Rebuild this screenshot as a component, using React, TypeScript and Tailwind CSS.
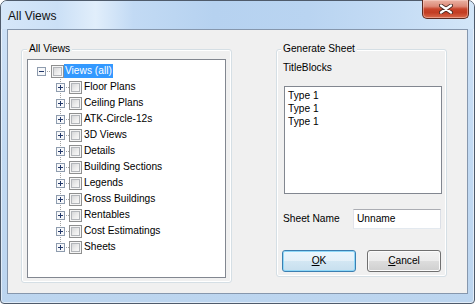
import React from "react";

const items = [
  "Floor Plans",
  "Ceiling Plans",
  "ATK-Circle-12s",
  "3D Views",
  "Details",
  "Building Sections",
  "Legends",
  "Gross Buildings",
  "Rentables",
  "Cost Estimatings",
  "Sheets",
];

function Check() {
  return (
    <div className="w-[13px] h-[13px] shrink-0 border border-[#8e8f8f] bg-[#f6f6f6] p-[1px]">
      <div className="w-full h-full border border-[#b3b6ba] bg-[linear-gradient(135deg,#d6d7d9_0%,#eeeeee_60%,#f8f8f8_100%)]" />
    </div>
  );
}

function Expander({ root, last }: { root?: boolean; last?: boolean }) {
  const w = root ? 14 : 13;
  return (
    <svg width={w} height={16} className="shrink-0 block">
      {!root && (
        <line x1="4.5" y1="0" x2="4.5" y2={last ? 8 : 16} stroke="#a3a3a3" strokeDasharray="1 1" />
      )}
      <line x1={root ? 10 : 10} y1="8.5" x2={w} y2="8.5" stroke="#a3a3a3" strokeDasharray="1 1" />
      <rect x="0.5" y="4.5" width="8" height="8" fill="#f7f8fa" stroke="#8e9cae" />
      <line x1="2" y1="8.5" x2="7" y2="8.5" stroke="#22386a" />
      {!root && <line x1="4.5" y1="6" x2="4.5" y2="11" stroke="#22386a" />}
    </svg>
  );
}

function CloseGlyph() {
  return (
    <svg width="14" height="10" viewBox="0 0 14 10" className="block">
      <path d="M2 1.5 L12 8.5 M12 1.5 L2 8.5" stroke="#4a2a22" strokeWidth="4" strokeLinecap="round" />
      <path d="M2 1.5 L12 8.5 M12 1.5 L2 8.5" stroke="#ffffff" strokeWidth="2.2" strokeLinecap="round" />
    </svg>
  );
}

export default function App() {
  return (
    <div className="w-[475px] h-[304px] bg-white font-['Liberation_Sans',Arial,sans-serif]">
      <div className="w-[475px] h-[304px] border border-[#4f5b6b] rounded-t-[7px] rounded-b-[4px] bg-[linear-gradient(180deg,#cfe2f7_0%,#c2daf3_50%,#bcd5ef_100%)] shadow-[inset_0_0_0_1px_rgba(255,255,255,0.55)] flex flex-col">
        {/* title bar */}
        <div className="h-[28px] flex justify-between rounded-t-[6px] bg-[linear-gradient(90deg,#d6e7f9_0%,#cbe0f6_12%,#e1eefb_20%,#c2daf4_28%,#b6d2f0_45%,#b9d4f1_65%,#c6ddf5_85%,#d3e6f8_100%)]">
          <span className="ml-[7px] mt-[8px] text-[12px] leading-[15px] text-[#111]">All Views</span>
          <div className="-mt-[1px] mr-[5px] w-[47px] h-[19px] rounded-b-[5px] border border-[#5b2a20] border-t-0 bg-[linear-gradient(180deg,#eab3a4_0%,#dd8a78_35%,#c8442b_50%,#c23d23_70%,#d96a4c_100%)] shadow-[inset_0_0_0_1px_rgba(255,220,210,0.45)] flex items-center justify-center">
            <CloseGlyph />
          </div>
        </div>

        {/* client area */}
        <div className="mx-[6px] h-[265px] border border-[#8697ad] bg-[#f0f0f0] flex items-start pl-[13px] pt-[19px]">
          {/* All Views group */}
          <div className="relative w-[211px] h-[234px] shrink-0 rounded-[3px] border border-[#d5dfe5] shadow-[inset_0_0_0_1px_#ffffff]">
            <span className="absolute left-[5px] -top-[7px] px-[2px] bg-[#f0f0f0] text-[10.2px] leading-[12px] text-black">
              All Views
            </span>
            <div className="ml-[5px] mt-[9px] w-[199px] h-[219px] border border-[#828790] bg-white pt-[3px] text-[10.2px] leading-[16px] text-black">
              <div className="flex items-center h-[16px] pl-[9px]">
                <Expander root />
                <Check />
                <span className="ml-0 h-[14px] leading-[14px] px-[1px] bg-[#3399ff] text-white">Views (all)</span>
              </div>
              {items.map((t, i) => (
                <div key={t} className="flex items-center h-[16px] pl-[28px]">
                  <Expander last={i === items.length - 1} />
                  <Check />
                  <span className="ml-[2px] whitespace-nowrap">{t}</span>
                </div>
              ))}
            </div>
          </div>

          {/* Generate Sheet group */}
          <div className="relative ml-[44px] w-[171px] h-[228px] shrink-0 rounded-[3px] border border-[#d5dfe5] shadow-[inset_0_0_0_1px_#ffffff] flex flex-col text-[10.2px] text-black">
            <span className="absolute left-[4px] -top-[7px] px-[2px] bg-[#f0f0f0] leading-[12px]">Generate Sheet</span>
            <div className="ml-[6px] mt-[12px] leading-[12px]">TitleBlocks</div>
            <div className="ml-[7px] mt-[12px] w-[158px] h-[108px] border border-[#828790] bg-white pl-[3px] pt-[2px] leading-[13px]">
              <div>Type 1</div>
              <div>Type 1</div>
              <div>Type 1</div>
            </div>
            <div className="ml-[6px] mt-[15px] h-[20px] flex items-center">
              <span className="w-[70px] shrink-0">Sheet Name</span>
              <div className="w-[88px] h-[20px] border border-[#abadb3] border-l-[#e2e3ea] border-r-[#dbdfe6] border-b-[#e3e9ef] bg-white pl-[3px] leading-[18px]">
                Unname
              </div>
            </div>
            <div className="ml-[5px] mt-[21px] flex">
              <div className="w-[74px] h-[22px] rounded-[3px] border border-[#3c7fb1] bg-[linear-gradient(180deg,#eaf6fd_0%,#e4f0f8_50%,#d3e7f3_50%,#c7dfee_100%)] shadow-[inset_0_0_0_1px_#8fd8f8] flex items-center justify-center leading-[12px]">
                <span className="underline underline-offset-[1px]">O</span>K
              </div>
              <div className="ml-[11px] w-[74px] h-[22px] rounded-[3px] border border-[#707070] bg-[linear-gradient(180deg,#f2f2f2_0%,#ebebeb_50%,#dddddd_50%,#cfcfcf_100%)] shadow-[inset_0_0_0_1px_#fbfbfb] flex items-center justify-center leading-[12px]">
                <span className="underline underline-offset-[1px]">C</span>ancel
              </div>
            </div>
          </div>
        </div>
      </div>
    </div>
  );
}
